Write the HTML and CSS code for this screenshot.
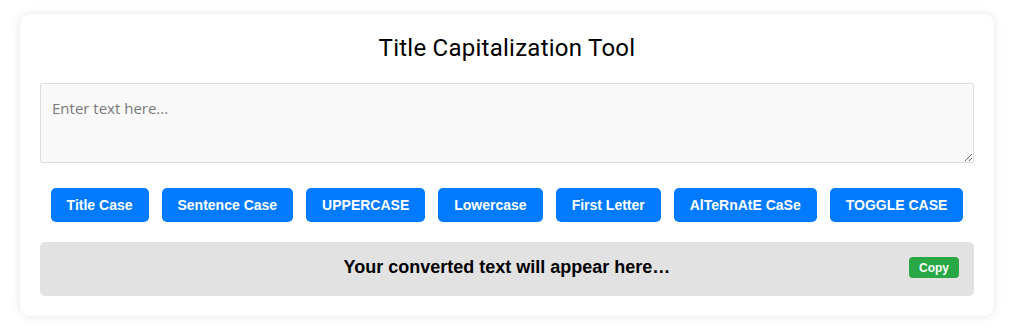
FILE: index.html
```html
<!DOCTYPE html>
<html lang="en">
<head>
<meta charset="utf-8">
<title>Title Capitalization Tool</title>
<link rel="stylesheet" href="styles.css">
</head>
<body>
<div class="container">
  <h1 class="title">Title Capitalization Tool</h1>
  <textarea class="input" placeholder="Enter text here..."></textarea>
  <div class="buttons">
    <button class="btn">Title Case</button>
    <button class="btn">Sentence Case</button>
    <button class="btn">UPPERCASE</button>
    <button class="btn">Lowercase</button>
    <button class="btn">First Letter</button>
    <button class="btn">AlTeRnAtE CaSe</button>
    <button class="btn">TOGGLE CASE</button>
  </div>
  <div class="output">
    <span class="output-text">Your converted text will appear here…</span>
    <button class="copy">Copy</button>
  </div>
</div>
</body>
</html>
```
FILE: styles.css
```css
* { box-sizing: border-box; }
html, body { margin: 0; padding: 0; background: #ffffff; }
body { padding: 14px 17px 16px 20px; font-family: "Liberation Sans", Arial, sans-serif; }
.container {
  width: 974px;
  background: #ffffff;
  border-radius: 10px;
  box-shadow: 0 0 10px rgba(0, 0, 0, 0.1);
  padding: 20px;
}
.title {
  margin: 0 0 21px;
  font-family: Roboto, "Noto Sans", sans-serif;
  font-weight: 400;
  font-size: 24px;
  letter-spacing: 0.25px;
  line-height: 28px;
  color: #000;
  text-align: center;
}
.input {
  display: block;
  width: 100%;
  height: 80px;
  padding: 14px 11px;
  border: 1px solid #dcdcdc;
  border-radius: 2px;
  background: #f9f9f9;
  font-family: "Open Sans", sans-serif;
  font-size: 15px;
  line-height: 1.4;
  resize: vertical;
  color: #333;
}
.input::placeholder { color: #7a7a7a; }
.buttons {
  display: flex;
  justify-content: center;
  gap: 13px;
  margin: 25px 0 20px;
}
.btn {
  background: #007bff;
  color: #fff;
  border: none;
  border-radius: 5px;
  padding: 0 16px;
  height: 34px;
  font-family: "Liberation Sans", Arial, sans-serif;
  font-weight: 700;
  font-size: 14px;
  cursor: pointer;
}
.output {
  position: relative;
  background: #e2e2e2;
  border-radius: 5px;
  padding: 15px 15px 18px;
  text-align: center;
}
.output-text {
  font-family: "Liberation Sans", Arial, sans-serif;
  font-weight: 700;
  font-size: 18px;
  color: #000;
}
.copy {
  position: absolute;
  top: 15px;
  right: 15px;
  height: 21px;
  padding: 0 10px;
  background: #28a745;
  color: #fff;
  border: none;
  border-radius: 4px;
  font-family: "Liberation Sans", Arial, sans-serif;
  font-weight: 700;
  font-size: 12px;
  cursor: pointer;
}
```
